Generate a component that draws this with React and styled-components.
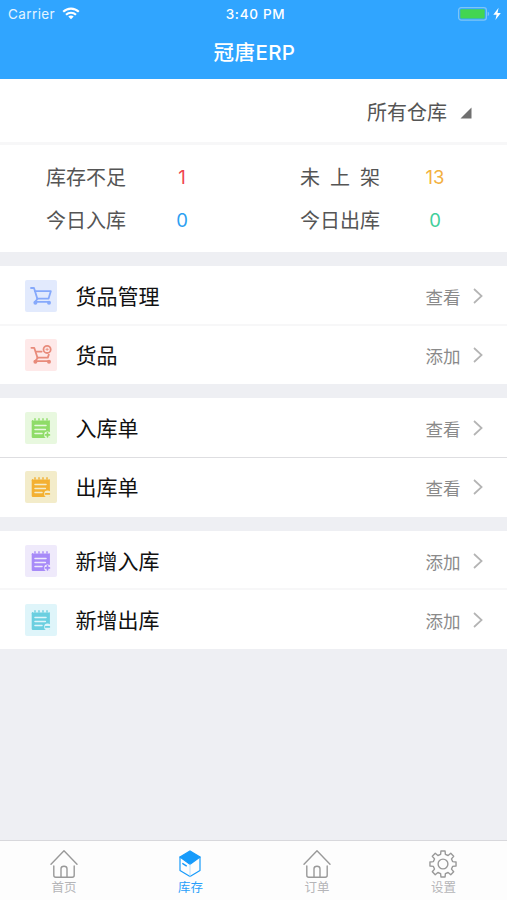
import styled, { createGlobalStyle } from 'styled-components';

const sections = [
  [
    { name: '货品管理', action: '查看', icon: 'cart', color: '#86a9fb', bg: '#e2eafd' },
    { name: '货品', action: '添加', icon: 'cartAdd', color: '#e88b7b', bg: '#fee9e9' },
  ],
  [
    { name: '入库单', action: '查看', icon: 'note', mark: 'plus', color: '#8fdc68', bg: '#e8f8df', line: '#dedee1' },
    { name: '出库单', action: '查看', icon: 'note', mark: 'minus', color: '#f3b032', bg: '#f3ecca' },
  ],
  [
    { name: '新增入库', action: '添加', icon: 'note', mark: 'plus', color: '#a78af8', bg: '#efeafb' },
    { name: '新增出库', action: '添加', icon: 'note', mark: 'minus', color: '#6bcfe0', bg: '#dff5fa' },
  ],
];

const tabs = [
  { label: '首页', icon: 'home' },
  { label: '库存', icon: 'box', active: true },
  { label: '订单', icon: 'home' },
  { label: '设置', icon: 'gear' },
];

const App = () => (
  <Screen>
    <GlobalStyle />
    <Header>
      <StatusBar>
        <Carrier>
          Carrier
          <WifiIcon />
        </Carrier>
        <Time>3:40 PM</Time>
        <Power>
          <BatteryIcon />
        </Power>
      </StatusBar>
      <Title>冠唐ERP</Title>
    </Header>

    <Filter>
      所有仓库
      <Corner viewBox="0 0 12 12">
        <path d="M11.5 0.5V11.5H0.5Z" fill="#707070" />
      </Corner>
    </Filter>

    <Stats>
      <StatName>库存不足</StatName>
      <StatValue $color="#f0464f">1</StatValue>
      <StatName $spread>未 上 架</StatName>
      <StatValue $color="#f3b13f">13</StatValue>
      <StatName>今日入库</StatName>
      <StatValue $color="#2c9ff2">0</StatValue>
      <StatName>今日出库</StatName>
      <StatValue $color="#3fcf9b">0</StatValue>
    </Stats>

    <Sections>
      {sections.map((rows) => (
        <Section key={rows[0].name}>
          {rows.map((row) => (
            <Row key={row.name} $line={row.line}>
              <IconBox $bg={row.bg}>
                {row.icon === 'note' ? (
                  <NoteIcon color={row.color} bg={row.bg} mark={row.mark} />
                ) : (
                  <CartIcon color={row.color} bg={row.bg} add={row.icon === 'cartAdd'} />
                )}
              </IconBox>
              <RowName>{row.name}</RowName>
              <RowAction>{row.action}</RowAction>
              <Chevron viewBox="0 0 10 16">
                <path d="M1 1L8.6 8L1 15" fill="none" stroke="#b4b4b4" strokeWidth="1.7" />
              </Chevron>
            </Row>
          ))}
        </Section>
      ))}
    </Sections>

    <TabBar>
      {tabs.map((tab) => (
        <Tab key={tab.label} $active={tab.active}>
          <TabIcon type={tab.icon} />
          {tab.label}
        </Tab>
      ))}
    </TabBar>
  </Screen>
);

const WifiIcon = () => (
  <svg width="18" height="13" viewBox="0 0 18 13" fill="none" stroke="#fff" strokeWidth="2.1">
    <path d="M1.2 4.8C5.6 0.5 12.4 0.5 16.8 4.8" />
    <path d="M4 7.8C6.9 5 11.1 5 14 7.8" />
    <path d="M9 12.3L6.3 9.6C7.8 8.2 10.2 8.2 11.7 9.6Z" fill="#fff" stroke="none" />
  </svg>
);

const BatteryIcon = () => (
  <svg width="44" height="15" viewBox="0 0 44 15">
    <rect x="0.6" y="0.6" width="27.8" height="12.6" rx="2.6" fill="none" stroke="#7ec5f6" strokeWidth="1.2" />
    <rect x="2.3" y="2.3" width="24.4" height="9.2" rx="1" fill="#43d551" />
    <path d="M29.7 4.7C31.6 5.3 31.6 8.5 29.7 9.1Z" fill="#7ec5f6" />
    <path d="M40.6 0.7L35.3 7.7H38.6L37.4 13.1L42.8 5.9H39.5Z" fill="#fff" />
  </svg>
);

const CartIcon = ({ color, bg, add }) => (
  <svg width="32" height="32" viewBox="0 0 32 32" fill="none" stroke={color} strokeWidth="1.8" strokeLinecap="round" strokeLinejoin="round">
    <path d={add ? 'M6.4 8.8H9.2L12.6 19L10.2 22.2H23.6' : 'M6 8H9L12.4 19L10 21.8H23.8'} />
    <path d={add ? 'M10.8 12.6H16.6M12.4 18.6H22.8L23.8 15.6' : 'M10 11.2H25.8L23.6 18.6H12.2'} />
    <circle cx="10.4" cy="22.8" r="2" fill={color} stroke="none" />
    <circle cx="24" cy="22.8" r="2" fill={color} stroke="none" />
    {add && (
      <>
        <circle cx="22.1" cy="10.4" r="3.6" fill={bg} strokeWidth="1.8" />
        <path d="M22.1 9.2V11.6M20.9 10.4H23.3" strokeWidth="0.8" />
      </>
    )}
  </svg>
);

const NoteIcon = ({ color, bg, mark }) => (
  <svg width="32" height="32" viewBox="0 0 32 32" fill="none" strokeLinecap="round">
    <rect x="6.7" y="8" width="18.2" height="18" rx="1.2" fill={color} />
    <path d="M10 9V6.8M14 9V6.8M18 9V6.8M22 9V6.8" stroke={bg} strokeWidth="3" strokeLinecap="butt" />
    <path d="M10 9.4V6.8M14 9.4V6.8M18 9.4V6.8M22 9.4V6.8" stroke={color} strokeWidth="1.4" />
    <path d="M10 13.6H21M10 17.6H20.4M10 21.6H17" stroke={bg} strokeWidth="1.5" />
    <circle cx="22.5" cy="22.9" r="3.3" fill={bg} />
    <path d={mark === 'plus' ? 'M22.5 21V24.8M20.6 22.9H24.4' : 'M20.7 22.9H24.3'} stroke={color} strokeWidth="1.8" />
  </svg>
);

const TabIcon = ({ type }) => (
  <svg width="30" height="30" viewBox="0 0 30 30" fill="none" stroke="currentColor" strokeWidth="1.4" strokeLinecap="round" strokeLinejoin="round">
    {type === 'home' && (
      <>
        <path d="M2 15.2L15 1.8L28 15.2" />
        <path d="M4.8 17V26.2Q4.8 28.2 6.8 28.2H23.2Q25.2 28.2 25.2 26.2V17" />
        <path d="M12 28V19.8Q12 17.3 15 17.3Q18 17.3 18 19.8V28" />
      </>
    )}
    {type === 'box' && (
      <>
        <path d="M15 2L25 8L15 15.2L5 8Z" fill="currentColor" />
        <path d="M5 8V21.6L15 27.6L25 21.6V8" strokeWidth="1.2" />
        <path d="M15 15.2V27.6" stroke="#a6d8fc" strokeWidth="0.8" />
        <path d="M7.8 14.6L11.3 16.8" />
      </>
    )}
    {type === 'gear' && (
      <>
        <circle cx="15" cy="15" r="4.9" />
        <path d={gearPath()} />
      </>
    )}
  </svg>
);

// eight teeth, 45 degrees apart, each as [angle offset, radius]
const gearPath = () => {
  const points = [];
  for (let i = 0; i < 8; i += 1) {
    [[-14, 9.9], [-9, 13.2], [9, 13.2], [14, 9.9]].forEach(([offset, r]) => {
      const a = ((i * 45 + offset) * Math.PI) / 180;
      points.push(`${(15 + r * Math.sin(a)).toFixed(2)} ${(15 - r * Math.cos(a)).toFixed(2)}`);
    });
  }
  return `M${points.join('L')}Z`;
};

const GlobalStyle = createGlobalStyle`
  * {
    box-sizing: border-box;
  }

  body {
    margin: 0;
    font-family: Inter, 'Noto Sans CJK SC', sans-serif;
  }

  svg {
    display: block;
    flex-shrink: 0;
  }
`;

const Screen = styled.div`
  display: flex;
  flex-direction: column;
  width: 507px;
  height: 900px;
  overflow: hidden;
  background-color: #eeeff3;
`;

const Header = styled.header`
  height: 79px;
  flex-shrink: 0;
  color: #fff;
  background-color: #30a5ff;
`;

const StatusBar = styled.div`
  display: grid;
  grid-template-columns: 1fr auto 1fr;
  align-items: center;
  height: 28px;
  padding: 0 5px 0 8px;
  font-size: 13.5px;
  line-height: 28px;
`;

const Carrier = styled.div`
  display: flex;
  align-items: center;
  gap: 7px;
  letter-spacing: 0.4px;
  color: #e4f4ff;

  svg {
    margin-bottom: 1px;
  }
`;

const Time = styled.div`
  padding-left: 1px;
  font-weight: 500;
  letter-spacing: 0.7px;
`;

const Power = styled.div`
  display: flex;
  justify-content: flex-end;
`;

const Title = styled.h1`
  margin: 0;
  padding-left: 2px;
  font-size: 20.5px;
  font-weight: 500;
  line-height: 50px;
  letter-spacing: 0.4px;
  text-align: center;
`;

const Filter = styled.div`
  display: flex;
  align-items: center;
  justify-content: flex-end;
  gap: 13px;
  height: 66px;
  flex-shrink: 0;
  padding: 1px 35px 0 0;
  border-bottom: 3px solid #f7f7f8;
  font-size: 20px;
  color: #555;
  background-color: #fff;
`;

const Corner = styled.svg`
  width: 12px;
  height: 12px;
  margin-top: 4px;
`;

const Stats = styled.div`
  display: grid;
  grid-template-columns: 109px 145px 108px 1fr;
  grid-auto-rows: 43px;
  height: 107px;
  flex-shrink: 0;
  padding: 12px 0 0 46px;
  font-size: 20px;
  line-height: 43px;
  background-color: #fff;
`;

const StatName = styled.div`
  color: #555;
  word-spacing: ${({ $spread }) => ($spread ? '4.4px' : '0')};
`;

const StatValue = styled.div`
  width: 54px;
  font-size: 18.5px;
  line-height: 40px;
  text-align: center;
  color: ${({ $color }) => $color};
`;

const Sections = styled.main`
  display: flex;
  flex-direction: column;
  flex: 1;
  gap: 14.4px;
  padding-top: 14px;
`;

const Section = styled.section`
  background-color: #fff;
`;

const Row = styled.div`
  display: flex;
  align-items: center;
  height: 58.6px;
  padding: 0 24.5px 0 25px;

  &:first-child {
    height: 59.5px;
    box-shadow: inset 0 ${({ $line }) => ($line ? `-1px ${$line}` : '-2px #f7f7f8')};
  }
`;

const IconBox = styled.div`
  width: 32px;
  height: 32px;
  border-radius: 2px;
  background-color: ${({ $bg }) => $bg};
`;

const RowName = styled.div`
  flex: 1;
  margin-left: 18.5px;
  padding-bottom: 2px;
  font-size: 21px;
  color: #111;
`;

const RowAction = styled.div`
  margin-right: 12px;
  padding-top: 1px;
  font-size: 17.5px;
  color: #8a8a8a;
`;

const Chevron = styled.svg`
  width: 10px;
  height: 16px;
`;

const TabBar = styled.nav`
  display: grid;
  grid-template-columns: repeat(4, 126.5px);
  height: 60px;
  flex-shrink: 0;
  padding-left: 0.7px;
  border-top: 1px solid #d8d8dc;
  background-color: #fdfdfd;
`;

const Tab = styled.div`
  display: flex;
  flex-direction: column;
  align-items: center;
  padding-top: 8px;
  font-size: 12.5px;
  line-height: 17px;
  color: ${({ $active }) => ($active ? '#279ffa' : '#b5b5b8')};

  svg {
    color: ${({ $active }) => ($active ? '#179bfb' : '#999')};
  }
`;

export default App;
